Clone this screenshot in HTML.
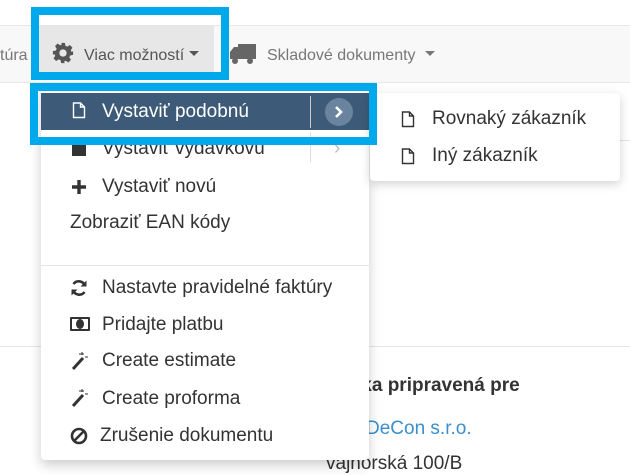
<!DOCTYPE html>
<html><head><meta charset="utf-8"><style>
*{margin:0;padding:0;box-sizing:border-box}
body{width:630px;height:475px;overflow:hidden;background:#fff;font-family:"Liberation Sans",sans-serif;position:relative;color:#333}
.abs{position:absolute}
.t{position:absolute;white-space:nowrap;font-size:19px;line-height:20px;margin-top:1px}
</style></head><body>
<div class="abs" style="left:0;top:25px;width:630px;height:58px;background:#f8f8f8;border-top:1px solid #e7e7e7;border-bottom:1px solid #e7e7e7"></div>
<div class="abs" style="left:39px;top:26px;width:175px;height:48px;background:#e7e7e7"></div>
<div class="t" style="left:0;top:45px;font-size:16px;color:#777">túra</div>
<svg class="abs" style="left:52px;top:42px" width="22" height="22" viewBox="0 0 24 24"><path fill="#555" d="M10 1h4l.7 3.2 2 .9 2.8-1.8 2.8 2.8-1.8 2.8.9 2L23 10v4l-3.2.7-.9 2 1.8 2.8-2.8 2.8-2.8-1.8-2 .9L14 23h-4l-.7-3.2-2-.9-2.8 1.8-2.8-2.8 1.8-2.8-.9-2L1 14v-4l3.2-.7.9-2L3.3 4.5l2.8-2.8 2.8 1.8 2-.9z"/><circle cx="12" cy="12" r="4" fill="#e7e7e7"/></svg>
<div class="t" style="left:84px;top:45px;font-size:16px;color:#555">Viac možností</div>
<div class="abs" style="left:189px;top:51px;border:5px solid transparent;border-top:5px solid #555"></div>
<svg class="abs" style="left:229px;top:43px" width="28" height="22" viewBox="0 0 28 22"><rect x="9" y="1" width="18" height="15" fill="#666"/><path d="M1 9l4-5h4v12H1z" fill="#666"/><circle cx="6" cy="18" r="3" fill="#666"/><circle cx="21" cy="18" r="3" fill="#666"/></svg>
<div class="t" style="left:267px;top:45px;font-size:16px;color:#777">Skladové dokumenty</div>
<div class="abs" style="left:425px;top:51px;border:5px solid transparent;border-top:5px solid #777"></div>

<div class="abs" style="left:369px;top:140px;width:261px;height:1px;background:#e5e5e5"></div>
<div class="abs" style="left:0;top:346px;width:630px;height:1px;background:#e5e5e5"></div>
<div class="t" style="left:356px;top:375px;font-weight:bold">ıka pripravená pre</div>
<div class="t" style="left:366px;top:418px;color:#3a8fd0">DeCon s.r.o.</div>
<div class="t" style="left:326px;top:453px">vajnorská 100/B</div>

<div class="abs" style="left:41px;top:86px;width:328px;height:374px;background:#fff;border-radius:4px;box-shadow:0 5px 12px rgba(0,0,0,.2)"></div>
<div class="abs" style="left:41px;top:93px;width:328px;height:37px;background:#3d5a78"></div>
<svg class="abs" style="left:72px;top:102px" width="14" height="17" viewBox="0 0 14 17"><path d="M1.5 1h7l4 4v10.5h-11z M8.5 1v4h4" fill="none" stroke="#fff" stroke-width="1.4"/></svg>
<div class="t" style="left:102px;top:101px;color:#fff">Vystaviť podobnú</div>
<div class="abs" style="left:310px;top:96px;width:1px;height:32px;background:#ccc"></div>
<div class="abs" style="left:325px;top:98px;width:28px;height:28px;border-radius:50%;background:#6a84a0"></div>
<svg class="abs" style="left:334px;top:105px" width="10" height="14" viewBox="0 0 10 14"><path d="M2 2l5 5-5 5" fill="none" stroke="#fff" stroke-width="2.6"/></svg>
<div class="abs" style="left:72px;top:142px;width:14px;height:14px;background:#333"></div>
<div class="t" style="left:102px;top:138px">Vystaviť výdavkovú</div>
<div class="abs" style="left:310px;top:132px;width:1px;height:30px;background:#ddd"></div>
<div class="t" style="left:334px;top:138px;color:#bbb">›</div>
<svg class="abs" style="left:71px;top:179px" width="16" height="16" viewBox="0 0 16 16"><path d="M8 1v14M1 8h14" stroke="#333" stroke-width="3.4"/></svg>
<div class="t" style="left:102px;top:176px">Vystaviť novú</div>
<div class="t" style="left:70px;top:212px">Zobraziť EAN kódy</div>
<div class="abs" style="left:41px;top:265px;width:328px;height:1px;background:#e5e5e5"></div>
<svg class="abs" style="left:70px;top:279px" width="18" height="18" viewBox="0 0 18 18"><path d="M15 7A6.5 6.5 0 0 0 3.5 5M3 11a6.5 6.5 0 0 0 11.5 2" fill="none" stroke="#333" stroke-width="2.6"/><path d="M16.5 1.5v6h-6zM1.5 16.5v-6h6z" fill="#333"/></svg>
<div class="t" style="left:102px;top:277px">Nastavte pravidelné faktúry</div>
<div class="abs" style="left:70px;top:317px;width:20px;height:14px;border:2px solid #333;border-radius:1px"></div>
<div class="abs" style="left:76px;top:319px;width:8px;height:10px;border-radius:50%;background:#333"></div>
<div class="t" style="left:102px;top:314px">Pridajte platbu</div>
<svg class="abs" style="left:70px;top:351px" width="18" height="20" viewBox="0 0 18 20"><path d="M3 18l10-11" stroke="#333" stroke-width="3"/><path d="M12 1v3M9 3h5M15 6h3" stroke="#333" stroke-width="1"/></svg>
<div class="t" style="left:102px;top:350px">Create estimate</div>
<svg class="abs" style="left:70px;top:388px" width="18" height="20" viewBox="0 0 18 20"><path d="M3 18l10-11" stroke="#333" stroke-width="3"/><path d="M12 1v3M9 3h5M15 6h3" stroke="#333" stroke-width="1"/></svg>
<div class="t" style="left:102px;top:388px">Create proforma</div>
<svg class="abs" style="left:70px;top:427px" width="18" height="18" viewBox="0 0 18 18"><circle cx="9" cy="9" r="7" fill="none" stroke="#333" stroke-width="2.6"/><path d="M4 14L14 4" stroke="#333" stroke-width="2.6"/></svg>
<div class="t" style="left:100px;top:425px">Zrušenie dokumentu</div>

<div class="abs" style="left:370px;top:93px;width:250px;height:88px;background:#fff;border-radius:4px;box-shadow:0 3px 10px rgba(0,0,0,.18)"></div>
<svg class="abs" style="left:401px;top:111px" width="14" height="17" viewBox="0 0 14 17"><path d="M1.5 1h7l4 4v10.5h-11z M8.5 1v4h4" fill="none" stroke="#333" stroke-width="1.4"/></svg>
<div class="t" style="left:432px;top:108px">Rovnaký zákazník</div>
<svg class="abs" style="left:401px;top:148px" width="14" height="17" viewBox="0 0 14 17"><path d="M1.5 1h7l4 4v10.5h-11z M8.5 1v4h4" fill="none" stroke="#333" stroke-width="1.4"/></svg>
<div class="t" style="left:432px;top:145px">Iný zákazník</div>

<div class="abs" style="left:31px;top:7px;width:198px;height:73px;border:8px solid #00a8ec"></div>
<div class="abs" style="left:30px;top:83px;width:347px;height:62px;border:8px solid #00a8ec"></div>
</body></html>
